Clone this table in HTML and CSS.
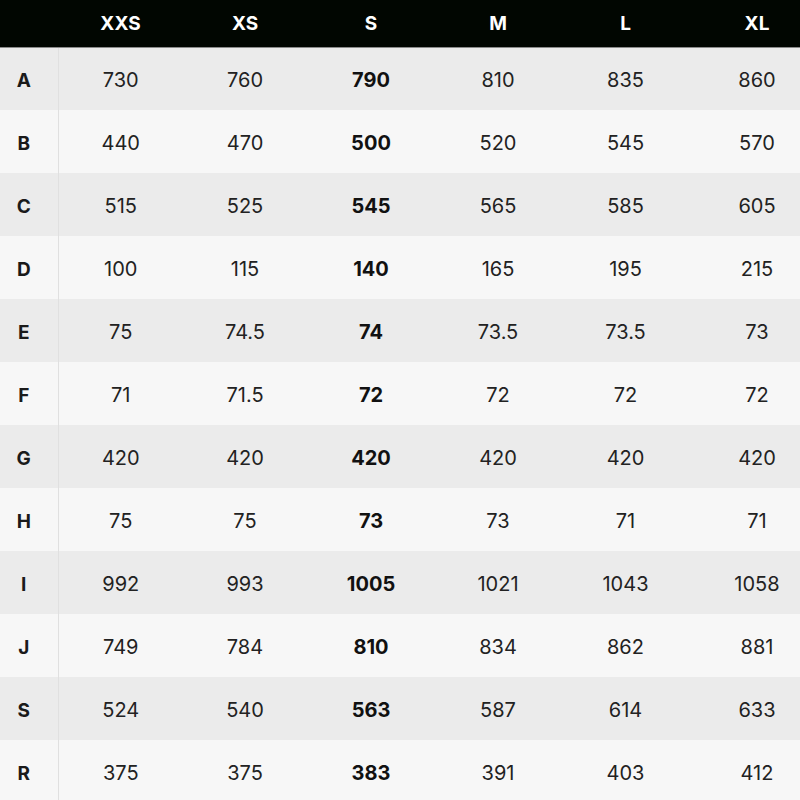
FILE: index.html
```html
<!DOCTYPE html>
<html lang="en">
<head>
<meta charset="utf-8">
<title>Size chart</title>
<link rel="stylesheet" href="styles.css">
</head>
<body>
<table class="chart">
  <colgroup>
    <col class="c-label">
    <col class="c-1">
    <col class="c-2">
    <col class="c-3">
    <col class="c-4">
    <col class="c-5">
    <col class="c-6">
  </colgroup>
  <thead>
    <tr class="head">
      <th></th><th>XXS</th><th>XS</th><th>S</th><th>M</th><th>L</th><th class="last">XL</th>
    </tr>
  </thead>
  <tbody>
    <tr class="odd"><th>A</th><td>730</td><td>760</td><td class="hl">790</td><td>810</td><td>835</td><td class="last">860</td></tr>
    <tr class="even"><th>B</th><td>440</td><td>470</td><td class="hl">500</td><td>520</td><td>545</td><td class="last">570</td></tr>
    <tr class="odd"><th>C</th><td>515</td><td>525</td><td class="hl">545</td><td>565</td><td>585</td><td class="last">605</td></tr>
    <tr class="even"><th>D</th><td>100</td><td>115</td><td class="hl">140</td><td>165</td><td>195</td><td class="last">215</td></tr>
    <tr class="odd"><th>E</th><td>75</td><td>74.5</td><td class="hl">74</td><td>73.5</td><td>73.5</td><td class="last">73</td></tr>
    <tr class="even"><th>F</th><td>71</td><td>71.5</td><td class="hl">72</td><td>72</td><td>72</td><td class="last">72</td></tr>
    <tr class="odd"><th>G</th><td>420</td><td>420</td><td class="hl">420</td><td>420</td><td>420</td><td class="last">420</td></tr>
    <tr class="even"><th>H</th><td>75</td><td>75</td><td class="hl">73</td><td>73</td><td>71</td><td class="last">71</td></tr>
    <tr class="odd"><th>I</th><td>992</td><td>993</td><td class="hl">1005</td><td>1021</td><td>1043</td><td class="last">1058</td></tr>
    <tr class="even"><th>J</th><td>749</td><td>784</td><td class="hl">810</td><td>834</td><td>862</td><td class="last">881</td></tr>
    <tr class="odd"><th>S</th><td>524</td><td>540</td><td class="hl">563</td><td>587</td><td>614</td><td class="last">633</td></tr>
    <tr class="even"><th>R</th><td>375</td><td>375</td><td class="hl">383</td><td>391</td><td>403</td><td class="last">412</td></tr>
  </tbody>
</table>
</body>
</html>
```

FILE: styles.css
```css
html, body {
  margin: 0;
  padding: 0;
  background: #f7f7f7;
  overflow: hidden;
}

.chart {
  width: 800px;
  table-layout: fixed;
  border-collapse: collapse;
  font-family: Inter, "Noto Sans", sans-serif;
  color: #222;
}

.c-label { width: 58px; }
.c-1 { width: 125px; }
.c-2 { width: 124px; }
.c-3 { width: 128px; }
.c-4 { width: 126px; }
.c-5 { width: 129px; }
.c-6 { width: 110px; }

.chart th,
.chart td {
  padding: 0;
  text-align: center;
  vertical-align: middle;
}

.chart .head {
  height: 47px;
  background: #010601;
}

.chart .head th {
  color: #fff;
  font-size: 19px;
  font-weight: 700;
  border-bottom: 1px solid #8a8a8a;
  padding-top: 1px;
}

.chart tbody tr {
  height: 63px;
}

.chart tbody th {
  font-size: 19px;
  font-weight: 700;
  color: #1a1a1a;
  border-right: 1px solid #e0e0e0;
  padding: 4px 10px 0 0;
}

.chart tbody td {
  font-size: 20px;
  font-weight: 400;
  padding-top: 3px;
}

.chart .last {
  padding-left: 24px;
}

.odd { background: #ebebeb; }
.even { background: #f7f7f7; }

.chart .hl {
  font-weight: 700;
  color: #111;
}
```
